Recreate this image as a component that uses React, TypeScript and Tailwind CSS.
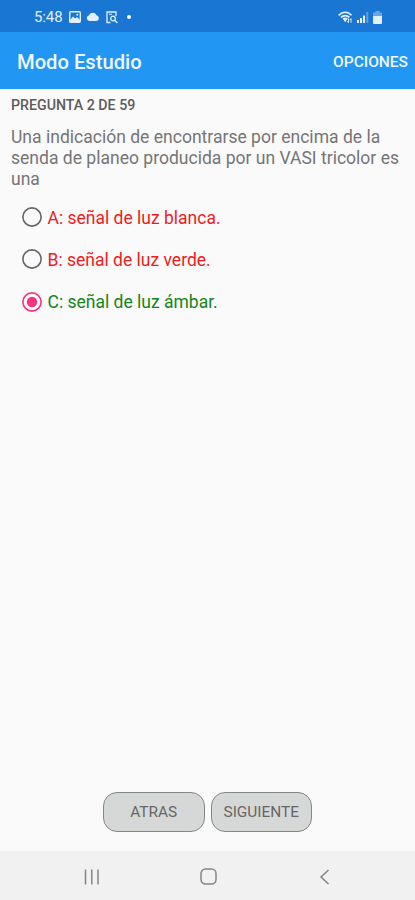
const answers = [
  { text: 'A: señal de luz blanca.', color: 'text-[#ee1c1c]', selected: false },
  { text: 'B: señal de luz verde.', color: 'text-[#ee1c1c]', selected: false },
  { text: 'C: señal de luz ámbar.', color: 'text-[#16841a]', selected: true },
];

function StatusBar() {
  return (
    <div className="flex h-8 items-center bg-[#1976d2] pt-[2px] text-[#e3f0fc]">
      <span className="ml-[34px] w-[34px] whitespace-nowrap pt-px text-[15px] tracking-[-0.1px]">5:48</span>
      <svg className="ml-px" width="12" height="12" viewBox="0 0 12 12">
        <rect x="0.7" y="0.7" width="10.6" height="10.6" rx="1" fill="#1976d2" fillOpacity="0.3" stroke="currentColor" strokeWidth="1.4" />
        <path d="M1 9 4 5.5 6 7.5 8 6l3 3v2H1z" fill="currentColor" />
        <circle cx="8.3" cy="3.7" r="1" fill="currentColor" />
      </svg>
      <svg className="ml-[5px]" width="14" height="10" viewBox="0 0 14 10">
        <path d="M3.2 9a2.900 2.900 0 0 1-.4-5.600A4.200 4.200 0 0 1 10.500 3.200 3 3 0 0 1 10.800 9z" fill="currentColor" />
      </svg>
      <svg className="ml-[6px]" width="12" height="13" viewBox="0 0 12 13" fill="none" stroke="currentColor" strokeWidth="1.3">
        <path d="M4.500 11.500H1V1h9v4" />
        <path d="M3 3.300h3" strokeWidth="1" />
        <circle cx="7" cy="7.500" r="2.300" />
        <path d="m8.700 9.200 2.600 2.800" />
      </svg>
      <span className="-mt-px ml-[9px] size-[4px] rounded-full bg-white" />
      <div className="ml-auto mr-[33px] flex items-center">
        <svg width="16" height="13" viewBox="0 0 16 13" fill="none" stroke="currentColor">
          <path d="M.7 4.300C4.500.2 10 .2 13.500 4.300M3 6.400c2.500-2.500 6-2.500 8.300 0M5.200 8.400c1.200-1.200 2.700-1.200 4 0" strokeWidth="1.700" />
          <path d="M5.800 8.500h2.700L7.200 10.500z" fill="currentColor" />
          <path d="M10.500 7.500v4M9.200 10.200l1.300 1.500M13 11.700v-4M11.800 9l1.200-1.500" strokeWidth="1" />
        </svg>
        <svg className="ml-[3px]" width="12" height="12" viewBox="0 0 12 12" fill="currentColor">
          <path d="M0 9h2v3H0zM3 7h2v5H3zM6 4.500h2V12H6z" />
          <path d="M9.300 1h2v11h-2z" opacity="0.35" />
        </svg>
        <svg className="ml-[4px]" width="9" height="13" viewBox="0 0 9 13" fill="currentColor">
          <path d="M2.500 0h4v1.500H9V5H0V1.500h2.500z" opacity="0.4" />
          <path d="M0 5h9v7a1 1 0 0 1-1 1H1a1 1 0 0 1-1-1z" />
        </svg>
      </div>
    </div>
  );
}

function Radio({ selected }: { selected: boolean }) {
  return (
    <svg className={selected ? 'shrink-0 text-[#f5357f]' : 'shrink-0 text-[#666666]'} width="20" height="20" viewBox="0 0 20 20">
      <circle cx="10" cy="10" r="9.100" fill="none" stroke="currentColor" strokeWidth="1.600" />
      {selected && <circle cx="10" cy="10" r="5.200" fill="currentColor" />}
    </svg>
  );
}

export default function App() {
  return (
    <div className="flex h-[900px] w-[415px] flex-col overflow-hidden bg-[#fafafa] font-['Roboto',sans-serif]">
      <StatusBar />
      <header className="flex h-[56.500px] items-center justify-between bg-[#2196f3] pl-[17px] pr-[7px] pt-[4px] font-medium text-[#f0f8ff]">
        <h1 className="whitespace-nowrap text-[20.2px]">Modo Estudio</h1>
        <button className="whitespace-nowrap text-[15.500px]">OPCIONES</button>
      </header>
      <main className="flex flex-1 flex-col">
        <h2 className="ml-[11px] mt-[6.500px] whitespace-nowrap text-[14.200px] font-medium leading-5 text-[#5b5b5b]">PREGUNTA 2 DE 59</h2>
        <p className="ml-[11px] mt-[12px] whitespace-nowrap text-[17.55px] leading-[21px] text-[#757575]">
          Una indicación de encontrarse por encima de la
          <br />
          senda de planeo producida por un VASI tricolor es
          <br />
          una
        </p>
        <div className="mt-[6px] flex flex-col pl-[22px]">
          {answers.map((a) => (
            <label key={a.text} className="flex h-[42.300px] items-center gap-[5.500px]">
              <Radio selected={a.selected} />
              <span className={`whitespace-nowrap pt-px text-[17.5px] leading-5 ${a.color}`}>{a.text}</span>
            </label>
          ))}
        </div>
        <div className="mb-[19px] ml-[103px] mt-auto flex gap-[6px] text-[15.400px] text-[#666666]">
          <button className="h-10 w-[101.500px] rounded-[14px] border border-[#858787] bg-[#d6d8d7] pt-px">ATRAS</button>
          <button className="h-10 w-[101.500px] rounded-[14px] border border-[#858787] bg-[#d6d8d7] pt-px">SIGUIENTE</button>
        </div>
      </main>
      <nav className="flex h-[49px] items-center bg-[#f1f1f1] pt-[2px] text-[#858585]">
        <svg className="ml-[83px]" width="16" height="16" viewBox="0 0 16 16" stroke="currentColor" strokeWidth="1.500">
          <path d="M2.500.5v15M8.800.5v15M15 .5v15" />
        </svg>
        <svg className="ml-[101px]" width="17" height="17" viewBox="0 0 17 17" fill="none" stroke="currentColor" strokeWidth="1.500">
          <rect x="1" y="1" width="15" height="15" rx="4.500" />
        </svg>
        <svg className="ml-[102px]" width="11" height="16" viewBox="0 0 11 16" fill="none" stroke="currentColor" strokeWidth="1.500">
          <path d="M9.500 1 2 8l7.500 7" />
        </svg>
      </nav>
    </div>
  );
}
